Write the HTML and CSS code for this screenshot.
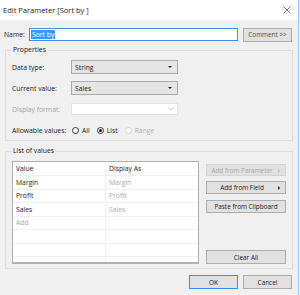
FILE: index.html
```html
<!DOCTYPE html>
<html lang="en">
<head>
    <meta charset="UTF-8">
    <title>Edit Parameter [Sort by ]</title>
    <link rel="stylesheet" href="styles.css">
</head>
<body>
    <div class="dialog">
        <div class="titlebar">
            <span>Edit Parameter [Sort by ]</span>
            <svg class="close" width="8" height="8" viewBox="0 0 8 8"><path d="M0.5 0.5L7.5 7.5M7.5 0.5L0.5 7.5" stroke="#6a6a6a" stroke-width="0.9" fill="none"/></svg>
        </div>

        <div class="name-row">
            <span class="name-label">Name:</span>
            <div class="name-input"><span class="selected">Sort by</span></div>
            <button class="btn comment">Comment &gt;&gt;</button>
        </div>

        <fieldset class="group props">
            <legend>Properties</legend>
            <div class="row">
                <span class="lbl">Data type:</span>
                <div class="select">String<i class="caret"></i></div>
            </div>
            <div class="row">
                <span class="lbl">Current value:</span>
                <div class="select">Sales<i class="caret"></i></div>
            </div>
            <div class="row">
                <span class="lbl disabled">Display format:</span>
                <div class="combo"><svg class="chev" width="6" height="4" viewBox="0 0 6 4"><path d="M0.5 0.5L3 3L5.5 0.5" stroke="#b8b8b8" stroke-width="0.8" fill="none"/></svg></div>
            </div>
            <div class="row">
                <span class="lbl">Allowable values:</span>
                <div class="radios">
                    <span class="radio"><i class="dot"></i>All</span>
                    <span class="radio checked"><i class="dot"></i>List</span>
                    <span class="radio off"><i class="dot"></i>Range</span>
                </div>
            </div>
        </fieldset>

        <fieldset class="group values">
            <legend>List of values</legend>
            <div class="values-body">
                <div class="grid">
                    <div class="grid-row head"><span>Value</span><span>Display As</span></div>
                    <div class="grid-row"><span>Margin</span><span class="muted">Margin</span></div>
                    <div class="grid-row"><span>Profit</span><span class="muted">Profit</span></div>
                    <div class="grid-row"><span>Sales</span><span class="muted">Sales</span></div>
                    <div class="grid-row"><span class="muted">Add</span><span></span></div>
                    <div class="grid-row"><span></span><span></span></div>
                    <div class="grid-row"><span></span><span></span></div>
                    <div class="grid-row"><span></span><span></span></div>
                </div>
                <div class="side">
                    <button class="btn side-btn has-arrow disabled">Add from Parameter<i class="arrow"></i></button>
                    <button class="btn side-btn has-arrow">Add from Field<i class="arrow"></i></button>
                    <button class="btn side-btn">Paste from Clipboard</button>
                    <button class="btn side-btn clear">Clear All</button>
                </div>
            </div>
        </fieldset>

        <div class="footer">
            <button class="btn default">OK</button>
            <button class="btn">Cancel</button>
        </div>
    </div>
</body>
</html>
```

FILE: styles.css
```css
/* dialog frame */
body {
    margin: 0;
    font-family: "Open Sans", "Noto Sans", sans-serif;
    font-size: 6.8px;
    color: #1a1a1a;
    background: #f0f0f0;
}

.dialog {
    width: 298px;
    height: 295px;
    background: #f0f0f0;
    border-right: 1px solid #9cc3ea;
    overflow: hidden;
}

.titlebar {
    height: 20px;
    background: #fff;
    display: flex;
    align-items: center;
    justify-content: space-between;
    padding: 0 7px 0 3px;
    font-size: 7.5px;
}

.close {
    display: block;
}

/* name */
.name-row {
    display: flex;
    align-items: center;
    margin-top: 8px;
    padding: 0 6px 0 4px;
    height: 13px;
}

.name-label {
    width: 25px;
}

.name-input {
    flex: 1;
    height: 13px;
    box-sizing: border-box;
    border: 1px solid #4a90d9;
    background: #fff;
    display: flex;
    align-items: center;
    padding-left: 1px;
}

.selected {
    background: #3399ff;
    color: #fff;
    padding: 0 1px;
    line-height: 9px;
}

.btn {
    font-family: inherit;
    font-size: 6.4px;
    color: #1a1a1a;
    background: #e1e1e1;
    border: 1px solid #adadad;
    padding: 0;
    margin: 0;
    height: 14px;
    box-sizing: border-box;
    position: relative;
}

.comment {
    width: 49px;
    margin-left: 5px;
    color: #4a4a4a;
}

/* group boxes */
.group {
    border: 1px solid #dcdcdc;
    margin: 4px 5px 0 5px;
    padding: 5px 6px 3px 6px;
}

.group legend {
    padding: 0 1px;
    margin-left: 0;
    line-height: 10px;
}

.row {
    display: flex;
    align-items: center;
    height: 14px;
    margin-bottom: 7px;
}

.row:last-child {
    margin-bottom: 0;
}

.lbl {
    width: 59px;
}

.disabled {
    color: #a6a6a6;
}

.select {
    width: 107px;
    height: 14px;
    box-sizing: border-box;
    background: #e5e5e5;
    border: 1px solid #acacac;
    display: flex;
    align-items: center;
    padding-left: 3px;
    position: relative;
}

.caret {
    position: absolute;
    right: 5px;
    top: 5px;
    border-left: 2px solid transparent;
    border-right: 2px solid transparent;
    border-top: 2px solid #1e1e1e;
}

.combo {
    width: 107px;
    height: 12px;
    box-sizing: border-box;
    background: #fff;
    border: 1px solid #e3e3e3;
    display: flex;
    align-items: center;
    justify-content: flex-end;
    padding-right: 3px;
}

.chev {
    display: block;
}

.radios {
    display: flex;
    align-items: center;
    gap: 7px;
    margin-left: 1px;
}

.radio {
    display: flex;
    align-items: center;
    gap: 3px;
}

.dot {
    width: 7px;
    height: 7px;
    box-sizing: border-box;
    border: 1px solid #333;
    border-radius: 50%;
    background: #fff;
    position: relative;
}

.checked .dot::after {
    content: "";
    position: absolute;
    left: 1px;
    top: 1px;
    width: 3px;
    height: 3px;
    border-radius: 50%;
    background: #1e1e1e;
}

.off {
    color: #b4b4b4;
}

.off .dot {
    border-color: #d0d0d0;
}

/* list of values */
.values {
    margin-top: 5px;
    padding: 5px 6px 4px 6px;
}

.values-body {
    display: flex;
    gap: 7px;
}

.grid {
    width: 187px;
    height: 103px;
    box-sizing: border-box;
    background: #fff;
    border: 1px solid #b0b0b0;
    border-bottom: 2px solid #b2b2ba;
    overflow: hidden;
}

.grid-row {
    display: grid;
    grid-template-columns: 92px 1fr;
    height: 13.5px;
    box-sizing: border-box;
    border-bottom: 1px solid #f0f0f0;
}

.grid-row.head {
    height: 14px;
}

.grid-row span {
    display: flex;
    align-items: center;
    padding-left: 3px;
}

.grid-row span + span {
    border-left: 1px solid #f0f0f0;
}

.muted {
    color: #a8a8a8;
}

.side {
    width: 80px;
    display: flex;
    flex-direction: column;
}

.side-btn {
    width: 80px;
    height: 13px;
    margin-bottom: 6px;
}

.has-arrow {
    padding-right: 8px;
}

.side-btn.disabled {
    margin-top: 3px;
    height: 12px;
    margin-bottom: 5px;
    color: #a6a6a6;
    border-color: #d4d4d4;
}

.arrow {
    position: absolute;
    right: 5px;
    top: 4px;
    border-top: 2px solid transparent;
    border-bottom: 2px solid transparent;
    border-left: 2px solid #1e1e1e;
}

.disabled .arrow {
    border-left-color: #bdbdbd;
}

.clear {
    margin-top: auto;
    margin-bottom: 0;
    height: 14px;
}

/* footer */
.footer {
    display: flex;
    justify-content: flex-end;
    gap: 5px;
    margin-top: 6px;
    padding-right: 6px;
}

.footer .btn {
    width: 49px;
}

.default {
    border-color: #3c8fdb;
}
```
